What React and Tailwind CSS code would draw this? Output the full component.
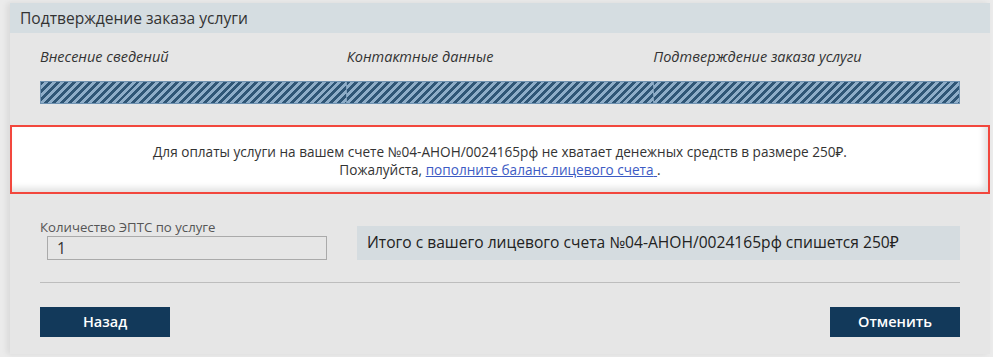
import React from 'react';

const steps = ['Внесение сведений', 'Контактные данные', 'Подтверждение заказа услуги'];

const stripes = {
  backgroundImage:
    'repeating-linear-gradient(135deg, #2f5676 0px, #2f5676 2.8px, #8eadc8 2.8px, #8eadc8 5.6px)',
};

const App = () => {
  return (
    <div
      className="w-[993px] h-[357px] bg-[#ebebeb] pt-[3px] pl-[10px] overflow-hidden text-[#333]"
      style={{ fontFamily: '"Open Sans", "Noto Sans", sans-serif' }}
    >
      <div className="w-[980px] h-[351px] bg-[#e6e6e6] shadow-[-3px_0_6px_rgba(0,0,0,0.08)] flex flex-col">
        <div className="h-[30px] bg-[#d5dde1] px-[10px] pt-[1px] flex items-center text-[15.6px] text-[#333]">
          Подтверждение заказа услуги
        </div>

        <div className="px-[30px] pt-[15px]">
          <div className="grid grid-cols-3 text-[14.5px] italic text-[#333] leading-[18px]">
            {steps.map((s) => (
              <div key={s}>{s}</div>
            ))}
          </div>
          <div className="mt-[15px] h-[23px] flex border border-[#6f92b1]">
            {steps.map((s, i) => (
              <div
                key={s}
                className={i === 0 ? 'flex-1' : 'flex-1 border-l border-[#7f9fbb]'}
                style={stripes}
              />
            ))}
          </div>
        </div>

        <div className="mt-[21px] h-[69px] border-2 border-[#f2473d] bg-white shadow-[inset_-4px_-4px_6px_rgba(0,0,0,0.12)] flex flex-col items-center justify-center text-[13.6px] leading-[18px] text-[#333] pt-[2px]">
          <p>
            Для оплаты услуги на вашем счете №04-АНОН/0024165рф не хватает денежных средств в размере 250₽.
          </p>
          <p>
            Пожалуйста,{' '}
            <a href="#" className="text-[#3d5bc4] underline">
              пополните баланс лицевого счета{' '}
            </a>
            .
          </p>
        </div>

        <div className="px-[30px] pt-[25px] flex items-start">
          <div className="w-[317px]">
            <div className="text-[13.2px] leading-[16px] text-[#555]">Количество ЭПТС по услуге</div>
            <input
              readOnly
              value="1"
              className="mt-[1px] ml-[7px] w-[280px] h-[24px] border border-[#aaa] bg-[#e6e6e6] px-[9px] text-[15.6px] text-[#333] outline-none"
            />
          </div>
          <div className="flex-1 mt-[7px] h-[34px] bg-[#d5dce0] px-[10px] flex items-center text-[15.6px] text-[#222]">
            Итого с вашего лицевого счета №04-АНОН/0024165рф спишется 250₽
          </div>
        </div>

        <div className="mx-[30px] mt-[22px] border-t border-[#bdbdbd]" />

        <div className="px-[30px] mt-[24px] flex justify-between">
          <button className="w-[130px] h-[30px] bg-[#12395a] text-white text-[14.5px] font-semibold">
            Назад
          </button>
          <button className="w-[130px] h-[30px] bg-[#12395a] text-white text-[14.5px] font-semibold">
            Отменить
          </button>
        </div>
      </div>
    </div>
  );
};

export default App;
